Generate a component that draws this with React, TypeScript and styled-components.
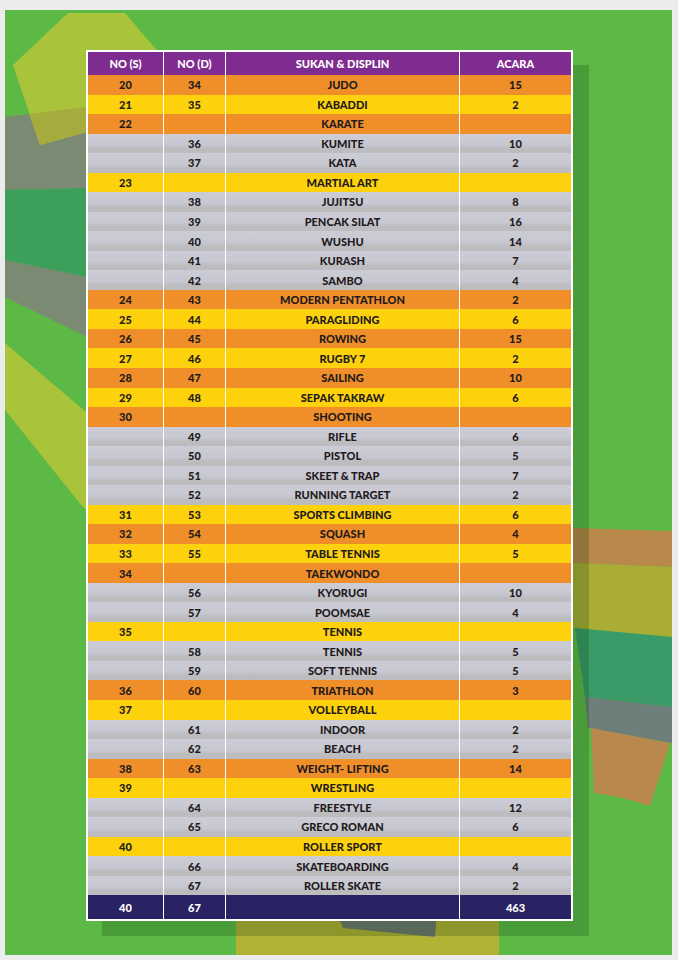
import styled, { createGlobalStyle } from "styled-components";

type Kind = "o" | "y" | "g";
type Sport = [string, string, string, string, Kind];

const sports: Sport[] = [
    ["20", "34", "JUDO", "15", "o"],
    ["21", "35", "KABADDI", "2", "y"],
    ["22", "", "KARATE", "", "o"],
    ["", "36", "KUMITE", "10", "g"],
    ["", "37", "KATA", "2", "g"],
    ["23", "", "MARTIAL ART", "", "y"],
    ["", "38", "JUJITSU", "8", "g"],
    ["", "39", "PENCAK SILAT", "16", "g"],
    ["", "40", "WUSHU", "14", "g"],
    ["", "41", "KURASH", "7", "g"],
    ["", "42", "SAMBO", "4", "g"],
    ["24", "43", "MODERN PENTATHLON", "2", "o"],
    ["25", "44", "PARAGLIDING", "6", "y"],
    ["26", "45", "ROWING", "15", "o"],
    ["27", "46", "RUGBY 7", "2", "y"],
    ["28", "47", "SAILING", "10", "o"],
    ["29", "48", "SEPAK TAKRAW", "6", "y"],
    ["30", "", "SHOOTING", "", "o"],
    ["", "49", "RIFLE", "6", "g"],
    ["", "50", "PISTOL", "5", "g"],
    ["", "51", "SKEET & TRAP", "7", "g"],
    ["", "52", "RUNNING TARGET", "2", "g"],
    ["31", "53", "SPORTS CLIMBING", "6", "y"],
    ["32", "54", "SQUASH", "4", "o"],
    ["33", "55", "TABLE TENNIS", "5", "y"],
    ["34", "", "TAEKWONDO", "", "o"],
    ["", "56", "KYORUGI", "10", "g"],
    ["", "57", "POOMSAE", "4", "g"],
    ["35", "", "TENNIS", "", "y"],
    ["", "58", "TENNIS", "5", "g"],
    ["", "59", "SOFT TENNIS", "5", "g"],
    ["36", "60", "TRIATHLON", "3", "o"],
    ["37", "", "VOLLEYBALL", "", "y"],
    ["", "61", "INDOOR", "2", "g"],
    ["", "62", "BEACH", "2", "g"],
    ["38", "63", "WEIGHT- LIFTING", "14", "o"],
    ["39", "", "WRESTLING", "", "y"],
    ["", "64", "FREESTYLE", "12", "g"],
    ["", "65", "GRECO ROMAN", "6", "g"],
    ["40", "", "ROLLER SPORT", "", "y"],
    ["", "66", "SKATEBOARDING", "4", "g"],
    ["", "67", "ROLLER SKATE", "2", "g"],
];

const fills: Record<Kind, string> = {
    o: "#f08f2a",
    y: "#fdd20c",
    g: "linear-gradient(to bottom, #cbccd6 0%, #c7c8d1 55%, #bcbcbf 78%, #bdbdbf 100%)",
};

const GlobalStyle = createGlobalStyle`
    html, body {
        margin: 0;
        background: #ececec;
    }
`;

const Page = styled.div`
    width: 678px;
    height: 960px;
    box-sizing: border-box;
    padding: 10px 6px 5px 5px;
`;

const Panel = styled.div`
    position: relative;
    height: 100%;
    box-sizing: border-box;
    padding: 40px 0 0 81px;
    background: #5cb946;
    overflow: hidden;
`;

// decorative arc bands behind the table
const Backdrop = styled.svg`
    position: absolute;
    inset: 0;
    width: 100%;
    height: 100%;
`;

const Table = styled.div`
    position: relative;
    width: 483px;
    border: 2px solid #fff;
    background: #fff;
    box-shadow: 16px 15px 0 0 rgba(0, 40, 0, 0.2);
    font-family: Lato, "Open Sans", sans-serif;
    font-weight: 900;
    font-size: 11px;
`;

const Row = styled.div<{ $h: number }>`
    display: grid;
    grid-template-columns: 75px 61px 233px 111px;
    column-gap: 1px;
    height: ${(p) => p.$h}px;
`;

const Cell = styled.div<{ $fill: string; $color: string }>`
    display: flex;
    align-items: center;
    justify-content: center;
    background: ${(p) => p.$fill};
    color: ${(p) => p.$color};
    white-space: nowrap;
`;

const Background = () => (
    <Backdrop viewBox="5 10 667 945" preserveAspectRatio="none">
        {/* left side bands */}
        <path d="M5 117 L87 107 L87 188 L5 190 Q4 150 5 117 Z" fill="#7b8a73" />
        <path d="M5 190 L87 188 L87 277 L5 260 Q3 225 5 190 Z" fill="#3d9f5c" />
        <path d="M5 260 L87 277 L87 337 L5 297 Q4 280 5 260 Z" fill="#7b8a73" />
        <path d="M5 343 L87 413 L87 510 L82 506 L5 410 Z" fill="#a9c43a" />
        <path d="M13 65 L68 13 L125 13 L165 60 L87 132 L40 145 Z" fill="#a9c43a" />
        <path d="M29 114 L87 107 L87 132 L40 145 Z" fill="#a5ac3d" />
        {/* right side bands */}
        <path d="M573 528 L672 531 L672 567 L573 563 Z" fill="#b8894b" />
        <path d="M573 563 L672 567 L672 637 L573 628 Z" fill="#a9ad36" />
        <path d="M575 628 L672 637 L672 707 L585 697 Z" fill="#3b9b68" />
        <path d="M585 697 L672 707 L672 743 L588 728 Z" fill="#6e7e7a" />
        <path d="M591 728 L670 743 L650 806 Q620 796 594 793 Z" fill="#b9884c" />
        {/* bottom shapes */}
        <path d="M236 910 L499 910 L499 955 L236 955 Z" fill="#b0b236" />
        <path d="M335 910 L437 910 L435 937 L343 928 Z" fill="#6f7a6f" />
    </Backdrop>
);

export default function App() {
    return (
        <>
            <GlobalStyle />
            <Page>
                <Panel>
                    <Background />
                    <Table>
                        <Row $h={23}>
                            {["NO (S)", "NO (D)", "SUKAN & DISPLIN", "ACARA"].map(
                                (t) => (
                                    <Cell key={t} $fill="#7f2c90" $color="#fff">
                                        {t}
                                    </Cell>
                                )
                            )}
                        </Row>
                        {sports.map(([s, d, name, acara, kind], i) => (
                            <Row key={i} $h={19.54}>
                                {[s, d, name, acara].map((t, j) => (
                                    <Cell key={j} $fill={fills[kind]} $color="#231a1c">
                                        {t}
                                    </Cell>
                                ))}
                            </Row>
                        ))}
                        <Row $h={24}>
                            {["40", "67", "", "463"].map((t, j) => (
                                <Cell key={j} $fill="#2a2363" $color="#fff">
                                    {t}
                                </Cell>
                            ))}
                        </Row>
                    </Table>
                </Panel>
            </Page>
        </>
    );
}
